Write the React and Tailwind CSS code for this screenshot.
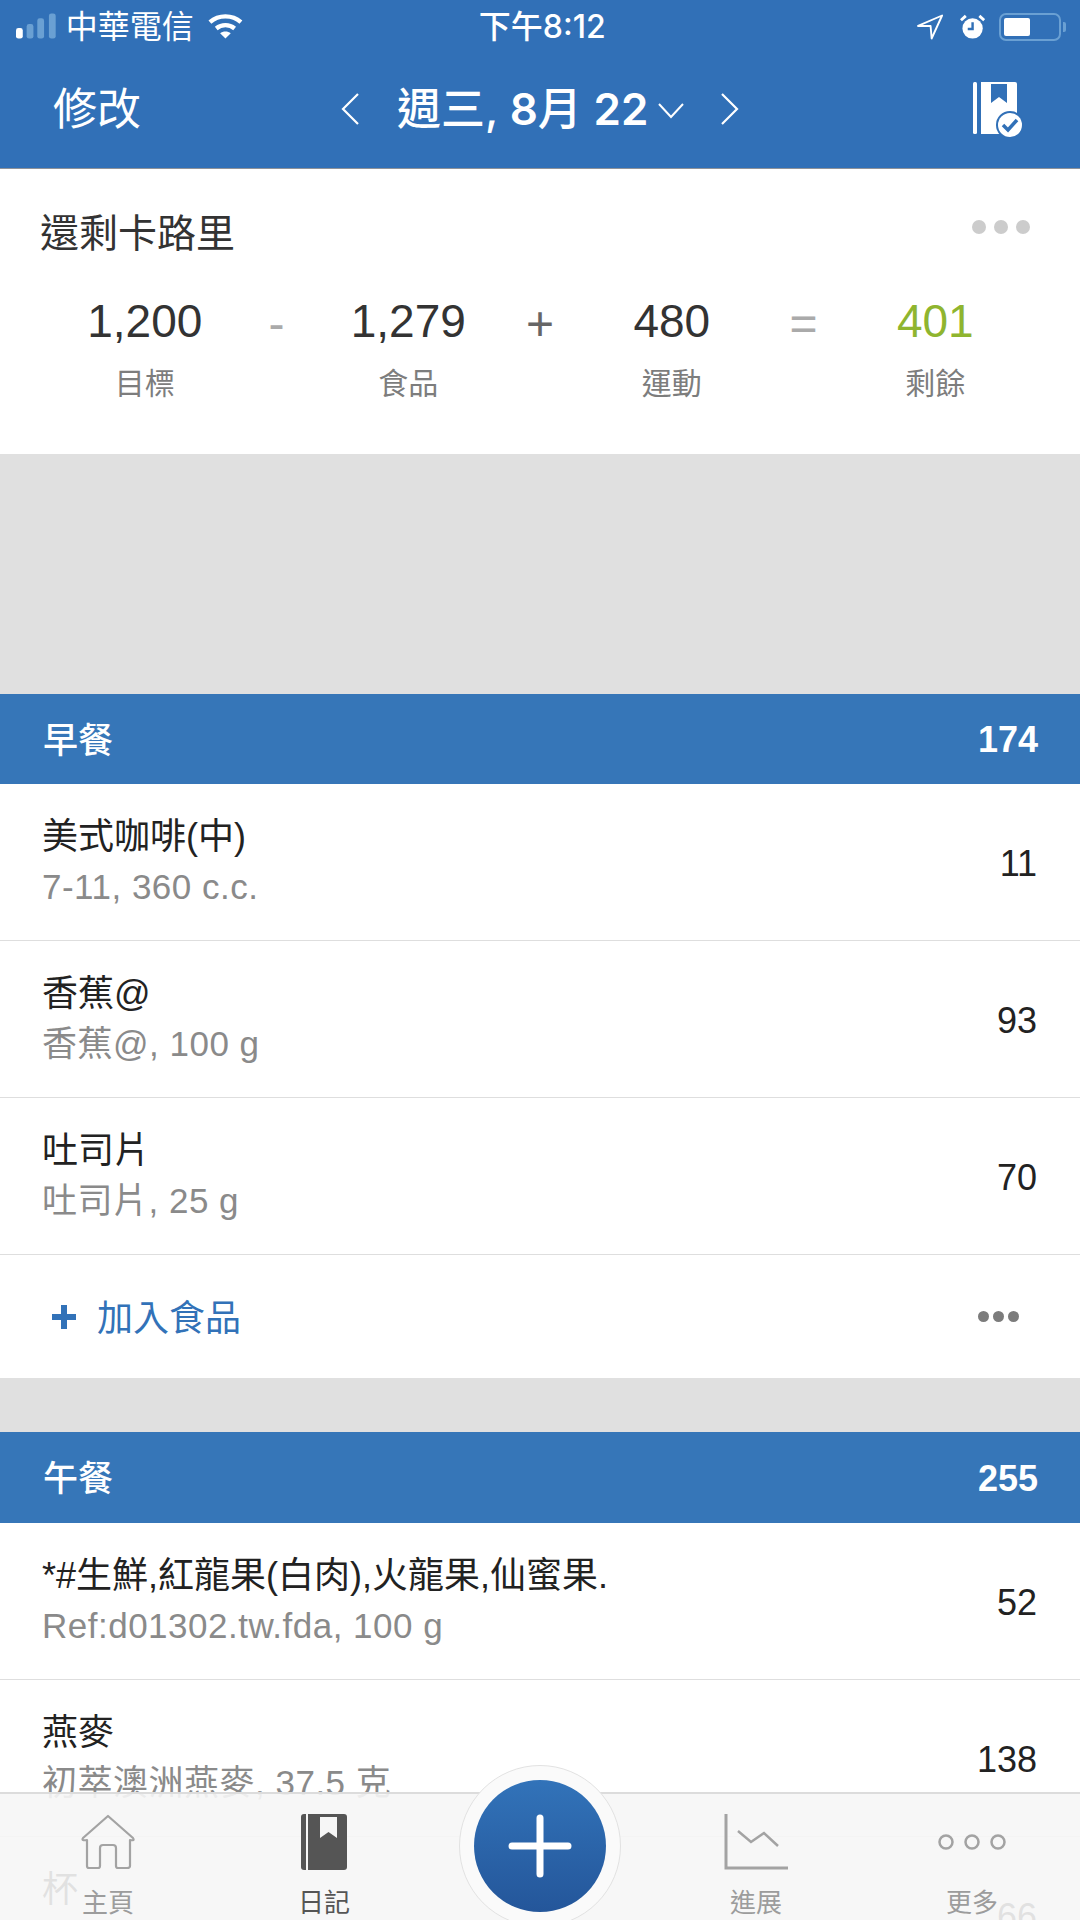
import React from 'react';

const BREAKFAST = [
  { name: '美式咖啡(中)', sub: '7-11, 360 c.c.', cal: 11 },
  { name: '香蕉@', sub: '香蕉@, 100 g', cal: 93 },
  { name: '吐司片', sub: '吐司片, 25 g', cal: 70 },
];

const LUNCH = [
  { name: '*#生鮮,紅龍果(白肉),火龍果,仙蜜果.', sub: 'Ref:d01302.tw.fda, 100 g', cal: 52 },
  { name: '燕麥', sub: '初萃澳洲燕麥, 37.5 克', cal: 138 },
  { name: '杯', sub: '', cal: 66 },
];

const STATS = [
  { value: '1,200', label: '目標', op: '-', opClass: 'text-[#aaaaaa]' },
  { value: '1,279', label: '食品', op: '+', opClass: 'text-[#666666]' },
  { value: '480', label: '運動', op: '=', opClass: 'text-[#aaaaaa]' },
  { value: '401', label: '剩餘', valueClass: 'text-[#8fb52f]' },
];

function StatusBar() {
  return (
    <div className="flex h-[54px] items-center pl-[16px] pr-[14px] text-white">
      <svg width="42" height="28" viewBox="0 0 42 28" className="mb-[1px]">
        <rect x="0" y="15" width="7" height="11" rx="2.500" fill="#fff" />
        <rect x="11" y="11" width="7" height="15" rx="2.500" fill="#6aa0d3" />
        <rect x="22" y="5" width="7" height="21" rx="2.500" fill="#6aa0d3" />
        <rect x="34" y="0" width="7" height="26" rx="2.500" fill="#6aa0d3" />
      </svg>
      <span className="ml-[9px] w-[147px] text-[32px] leading-none">中華電信</span>
      <svg width="36" height="28" viewBox="0 0 36 28" fill="none" stroke="#fff" strokeWidth="4.500">
        <path d="M2 9 C11 1 25 1 34 9" />
        <path d="M8.500 15.500 C14 11 22 11 27.500 15.500" />
        <path d="M18 26 L12.500 20.500 C15.500 18 20.500 18 23.500 20.500 Z" fill="#fff" stroke="none" />
      </svg>
      <span className="ml-[236px] w-[128px] whitespace-nowrap font-['Inter','Noto_Sans_CJK_TC',sans-serif] text-[32px] font-medium leading-none">下午8:12</span>
      <svg width="27" height="26" viewBox="0 0 25 24" fill="none" stroke="#fff" strokeWidth="1.800" className="ml-[311px]">
        <path d="M1 11 L24 1 L14 23 L13 11 Z" strokeLinejoin="round" />
      </svg>
      <svg width="26" height="26" viewBox="0 0 26 26" className="ml-[17px]">
        <circle cx="13" cy="14.500" r="10.500" fill="#fff" />
        <path d="M13 8 V15 H8" stroke="#3170b7" strokeWidth="2.500" fill="none" />
        <path d="M1 6 L6 1.500 M25 6 L20 1.500" stroke="#fff" strokeWidth="3" />
      </svg>
      <div className="ml-[14px] flex items-center">
        <div className="h-[28px] w-[62px] rounded-[7px] border-2 border-[#6aa0d3] p-[3px]">
          <div className="h-full w-[26px] rounded-[2px] bg-white" />
        </div>
        <div className="ml-[2px] h-[10px] w-[3px] rounded-r-[2px] bg-[#6aa0d3]" />
      </div>
    </div>
  );
}

function Header() {
  return (
    <div className="h-[169px] border-b border-[#8e9299] bg-[#3170b7]">
      <StatusBar />
      <div className="flex h-[110px] items-center text-white">
        <span className="ml-[53px] mt-[2px] w-[288px] text-[44px] leading-none">修改</span>
        <svg width="18" height="32" viewBox="0 0 18 32" fill="none" stroke="#fff" strokeWidth="2.200">
          <path d="M17 1 L2 16 L17 31" />
        </svg>
        <span className="ml-[38px] w-[261px] whitespace-nowrap font-['Inter','Noto_Sans_CJK_TC',sans-serif] text-[44px] font-medium leading-none">
          週三, <span className="font-semibold">8</span>月 <span className="font-semibold">22</span>
        </span>
        <svg width="26" height="16" viewBox="0 0 26 16" fill="none" stroke="#fff" strokeWidth="2" className="mt-[3px]">
          <path d="M1 1 L13 14 L25 1" />
        </svg>
        <svg width="18" height="32" viewBox="0 0 18 32" fill="none" stroke="#fff" strokeWidth="2.200" className="ml-[37px]">
          <path d="M1 1 L16 16 L1 31" />
        </svg>
        <svg width="52" height="56" viewBox="0 0 52 56" className="ml-[234px] mt-[1px]">
          <rect x="0" y="0" width="4" height="52" rx="1.500" fill="#fff" />
          <path d="M8 0 H42 Q44 0 44 2 V50 Q44 52 42 52 H8 Z" fill="#fff" />
          <path d="M18 2 H34 V21 L26 15 L18 21 Z" fill="#3170b7" />
          <circle cx="37" cy="43" r="14" fill="#3170b7" />
          <circle cx="37" cy="43" r="12" fill="#fff" />
          <path d="M30 43 L35 48 L44 38" fill="none" stroke="#3170b7" strokeWidth="3.500" />
        </svg>
      </div>
    </div>
  );
}

function Remaining() {
  return (
    <div className="h-[285px] bg-white pt-[39px]">
      <div className="flex items-center justify-between pl-[40px] pr-[50px]">
        <span className="text-[39px] leading-[52px] text-[#333333]">還剩卡路里</span>
        <div className="mb-[14px] flex gap-[8px]">
          <div className="size-[14px] rounded-full bg-[#cccccc]" />
          <div className="size-[14px] rounded-full bg-[#cccccc]" />
          <div className="size-[14px] rounded-full bg-[#cccccc]" />
        </div>
      </div>
      <div className="mt-[31px] flex px-[13px]">
        {STATS.map(s => (
          <React.Fragment key={s.label}>
            <div className="flex flex-1 flex-col items-center">
              <span className={`text-[46px] leading-[60px] ${s.valueClass || 'text-[#333333]'}`}>{s.value}</span>
              <span className="mt-[13px] text-[30px] leading-[40px] text-[#7d7d7d]">{s.label}</span>
            </div>
            {s.op && (
              <div className="flex h-[60px] w-0 items-center justify-center">
                <span className={`mt-[6px] text-[48px] leading-none ${s.opClass}`}>{s.op}</span>
              </div>
            )}
          </React.Fragment>
        ))}
      </div>
    </div>
  );
}

function MealHeader({ title, total, className }) {
  return (
    <div className={`flex items-center justify-between bg-[#3676b8] pl-[43px] pr-[42px] text-white ${className}`}>
      <span className="mt-[2px] text-[35px] font-medium leading-none">{title}</span>
      <span className="mt-[2px] text-[36px] font-bold leading-none">{total}</span>
    </div>
  );
}

function FoodRow({ item }) {
  return (
    <div className="flex h-[157px] items-center justify-between border-b border-[#dedede] bg-white pl-[42px] pr-[43px]">
      <div className="flex flex-col">
        <span className="h-[50px] text-[36px] leading-[50px] text-[#222222]">{item.name}</span>
        <span className="h-[50px] text-[35px] leading-[50px] tracking-[0.5px] text-[#8a8a8a]">{item.sub}</span>
      </div>
      <span className="mt-[4px] text-[36px] leading-none text-[#222222]">{item.cal}</span>
    </div>
  );
}

function AddFood() {
  return (
    <div className="flex h-[123px] items-center justify-between bg-white pl-[52px] pr-[61px]">
      <div className="flex items-center">
        <svg width="24" height="24" viewBox="0 0 24 24">
          <path d="M9 0 H15 V9 H24 V15 H15 V24 H9 V15 H0 V9 H9 Z" fill="#3272b8" />
        </svg>
        <span className="ml-[21px] mt-[4px] text-[36px] leading-none text-[#3272b8]">加入食品</span>
      </div>
      <div className="flex gap-[4px]">
        <div className="size-[11px] rounded-full bg-[#7c7c7c]" />
        <div className="size-[11px] rounded-full bg-[#7c7c7c]" />
        <div className="size-[11px] rounded-full bg-[#7c7c7c]" />
      </div>
    </div>
  );
}

function TabItem({ label, active, children }) {
  return (
    <div className="flex flex-col items-center">
      <div className="flex h-[64px] items-end">{children}</div>
      <span className={`mt-[18px] text-[26px] leading-[30px] ${active ? 'text-[#555555]' : 'text-[#9c9c9c]'}`}>{label}</span>
    </div>
  );
}

function TabBar() {
  return (
    <div className="absolute bottom-0 left-0 right-0 h-[128px] border-t-2 border-[#dcdcdc] bg-[#f6f6f6]/90">
      <div className="absolute left-[459px] top-[-29px] flex size-[162px] items-center justify-center rounded-full border border-[#e2e2e2] bg-[#fafafa]">
        <div className="flex size-[132px] items-center justify-center rounded-full bg-gradient-to-b from-[#3273b9] to-[#24569a]">
          <svg width="64" height="64" viewBox="0 0 64 64" fill="none" stroke="#fff" strokeWidth="7" strokeLinecap="round">
            <path d="M32 4 V60 M4 32 H60" />
          </svg>
        </div>
      </div>
      <div className="grid grid-cols-5 pt-[12px]">
        <TabItem label="主頁">
          <svg width="56" height="56" viewBox="0 0 56 56" fill="none" stroke="#a3a3a3" strokeWidth="2.200" strokeLinejoin="round">
            <path d="M3 24 L28 2 L53 24 Q55 27 50 26 V52 Q50 54 47 54 H38 Q36 54 36 52 V34 Q36 31 33 31 H23 Q20 31 20 34 V52 Q20 54 18 54 H9 Q7 54 7 52 V26 Q1 27 3 24 Z" />
          </svg>
        </TabItem>
        <TabItem label="日記" active>
          <svg width="46" height="56" viewBox="0 0 46 56">
            <path d="M3 0 H5 V56 H3 Q0 56 0 53 V3 Q0 0 3 0 Z" fill="#555555" />
            <path d="M7 0 H43 Q46 0 46 3 V53 Q46 56 43 56 H7 Z" fill="#555555" />
            <path d="M19 3 H36 V24 L27.500 18 L19 24 Z" fill="#f6f6f6" />
          </svg>
        </TabItem>
        <div />
        <TabItem label="進展">
          <svg width="64" height="56" viewBox="0 0 64 56" fill="none" stroke="#a3a3a3">
            <path d="M2 0 V54 H64" strokeWidth="3" />
            <path d="M14 17 L27 28 L40 19 L54 32" strokeWidth="2.500" />
          </svg>
        </TabItem>
        <TabItem label="更多">
          <svg width="68" height="18" viewBox="0 0 68 18" fill="none" stroke="#a3a3a3" strokeWidth="2.500" className="mb-[19px]">
            <circle cx="8" cy="9" r="6.500" />
            <circle cx="34" cy="9" r="6.500" />
            <circle cx="60" cy="9" r="6.500" />
          </svg>
        </TabItem>
      </div>
    </div>
  );
}

export default function App() {
  return (
    <div className="relative h-[1920px] w-[1080px] overflow-hidden bg-white font-['Liberation_Sans','Noto_Sans_CJK_TC',sans-serif]">
      <Header />
      <Remaining />
      <div className="h-[240px] bg-[#e0e0e0]" />
      <MealHeader title="早餐" total={174} className="h-[90px]" />
      {BREAKFAST.map(item => <FoodRow key={item.name} item={item} />)}
      <AddFood />
      <div className="h-[54px] bg-[#e0e0e0]" />
      <MealHeader title="午餐" total={255} className="h-[91px]" />
      {LUNCH.map(item => <FoodRow key={item.name} item={item} />)}
      <TabBar />
    </div>
  );
}
